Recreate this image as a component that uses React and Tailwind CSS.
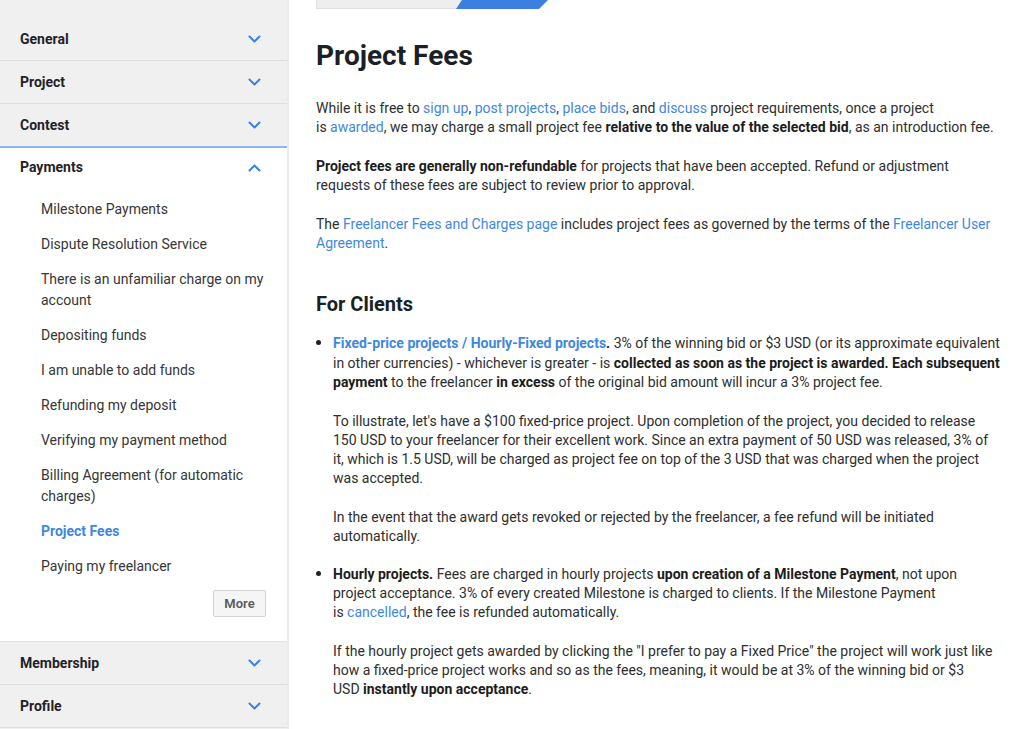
import { useState } from "react";

const LINK = "text-[#3f88de] hover:underline";

function Chevron({ up }) {
    return (
        <svg width="13" height="8" viewBox="0 0 13 8" fill="none" className="text-[#3c82dc]">
            {up ? (
                <path d="M1.5 6.5 6.5 1.5 11.5 6.5" stroke="currentColor" strokeWidth="2" strokeLinecap="round" strokeLinejoin="round" />
            ) : (
                <path d="M1.5 1.5 6.5 6.5 11.5 1.5" stroke="currentColor" strokeWidth="2" strokeLinecap="round" strokeLinejoin="round" />
            )}
        </svg>
    );
}

const sections = ["General", "Project", "Contest", "Payments", "Membership", "Profile"];

const paymentItems = [
    "Milestone Payments",
    "Dispute Resolution Service",
    "There is an unfamiliar charge on my account",
    "Depositing funds",
    "I am unable to add funds",
    "Refunding my deposit",
    "Verifying my payment method",
    "Billing Agreement (for automatic charges)",
    "Project Fees",
    "Paying my freelancer",
];

function Sidebar() {
    const [open, setOpen] = useState("Payments");
    const [active, setActive] = useState("Project Fees");

    return (
        <aside className="w-[289px] shrink-0 bg-[#f0f0f0] border-r-2 border-[#ebebeb] pt-[18px] min-h-screen">
            {sections.map((name, i) => {
                const isOpen = open === name;
                const next = sections[i + 1];
                return (
                    <div
                        key={name}
                        className={
                            isOpen
                                ? "bg-white border-t-2 border-[#8db6ea] border-b border-b-[#e2e2e2]"
                                : next === open
                                ? ""
                                : "border-b border-[#e0e0e0]"
                        }
                    >
                        <button
                            onClick={() => setOpen(isOpen ? null : name)}
                            className={`w-full flex items-center justify-between pl-5 pr-[26px] text-left ${
                                isOpen ? "h-[39px]" : "h-[42px]"
                            }`}
                        >
                            <span className="text-[14px] font-bold text-[#1f2329]">{name}</span>
                            <Chevron up={isOpen} />
                        </button>
                        {isOpen && (
                            <div>
                                <ul className="flex flex-col gap-[14px] pl-[41px] pr-5 pt-[12px] text-[14px] leading-[21px] text-[#363636]">
                                    {paymentItems.map((item) => (
                                        <li key={item}>
                                            <a
                                                href="#"
                                                onClick={(e) => {
                                                    e.preventDefault();
                                                    setActive(item);
                                                }}
                                                className={active === item ? "font-bold text-[#3f88de]" : ""}
                                            >
                                                {item}
                                            </a>
                                        </li>
                                    ))}
                                </ul>
                                <div className="flex justify-end pr-[21px] pt-[13px] pb-[24px]">
                                    <button className="h-[27px] w-[53px] border border-[#d2d2d2] bg-[#f5f5f5] text-[13px] font-semibold text-[#5a5a5a] rounded-[2px]">
                                        More
                                    </button>
                                </div>
                            </div>
                        )}
                    </div>
                );
            })}
        </aside>
    );
}

function Article() {
    return (
        <main className="flex-1 pl-[27px] pr-6 text-[14px] leading-[19.3px] text-[#2e2e2e]">
            <div className="flex h-[9px]">
                <div className="w-[145px] bg-[#eeeeee] border border-t-0 border-[#e0e0e0]" />
                <div className="w-[92px] -ml-[5px] bg-[#3b7fe0] [clip-path:polygon(6px_0,100%_0,calc(100%-9px)_100%,0_100%)]" />
            </div>

            <h1 className="mt-[30px] text-[28px] leading-[34px] font-bold text-[#1b1f27]">Project Fees</h1>

            <p className="mt-[26px]">
                While it is free to <a href="#" className={LINK}>sign up</a>,{" "}
                <a href="#" className={LINK}>post projects</a>,{" "}
                <a href="#" className={LINK}>place bids</a>, and{" "}
                <a href="#" className={LINK}>discuss</a> project requirements, once a project
                is&nbsp;<a href="#" className={LINK}>awarded</a>, we may charge a small project fee{" "}
                <b className="text-[#1c1c1c]">relative to the value of the selected bid</b>, as an introduction fee.
            </p>

            <p className="mt-[19.3px]">
                <b className="text-[#1c1c1c]">Project fees are generally non-refundable</b> for projects that have been
                accepted. Refund or adjustment requests of these fees are subject to review prior to approval.
            </p>

            <p className="mt-[19.3px]">
                The <a href="#" className={LINK}>Freelancer Fees and Charges page</a> includes project fees as governed
                by the terms of the <a href="#" className={LINK}>Freelancer User Agreement</a>.
            </p>

            <h2 className="mt-[39px] text-[20px] leading-[24px] font-bold text-[#1b1f27]">For Clients</h2>

            <ul className="mt-[17px] list-disc pl-[17px] marker:text-[#222] marker:text-[16px]">
                <li>
                    <a href="#" className="font-bold text-[#3f88de]">Fixed-price projects / Hourly-Fixed projects</a>
                    <b className="text-[#1c1c1c]">.</b> 3% of the winning bid or $3 USD (or its approximate equivalent
                    in other currencies) - whichever is greater - is{" "}
                    <b className="text-[#1c1c1c]">collected as soon as the project is awarded. Each subsequent payment</b>{" "}
                    to the freelancer <b className="text-[#1c1c1c]">in excess</b> of the original bid amount will incur a
                    3% project fee.
                    <br />
                    <br />
                    To illustrate, let's have a $100 fixed-price project. Upon completion of the project, you decided to
                    release 150 USD to your freelancer for their excellent work. Since an extra payment of 50 USD was
                    released, 3% of it, which is 1.5 USD, will be charged as project fee on top of the 3 USD that was
                    charged when the project was accepted.
                    <br />
                    <br />
                    In the event that the award gets revoked or rejected by the freelancer, a fee refund will be
                    initiated automatically.
                </li>
                <li className="mt-[17px]">
                    <b className="text-[#1c1c1c]">Hourly projects.</b> Fees are charged in hourly projects{" "}
                    <b className="text-[#1c1c1c]">upon creation of a Milestone Payment</b>, not upon project acceptance.
                    3% of every created Milestone is charged to clients. If the Milestone Payment
                    <br />
                    is <a href="#" className={LINK}>cancelled</a>, the fee is refunded automatically.
                    <br />
                    <br />
                    If the hourly project gets awarded by clicking the "I prefer to pay a Fixed Price" the project will
                    work just like how a fixed-price project works and so as the fees, meaning, it would be at 3% of the
                    winning bid or $3 USD&nbsp;<b className="text-[#1c1c1c]">instantly upon acceptance</b>.
                </li>
            </ul>
        </main>
    );
}

export default function App() {
    return (
        <div className="flex min-h-screen bg-white font-['Roboto',sans-serif]">
            <Sidebar />
            <Article />
        </div>
    );
}
